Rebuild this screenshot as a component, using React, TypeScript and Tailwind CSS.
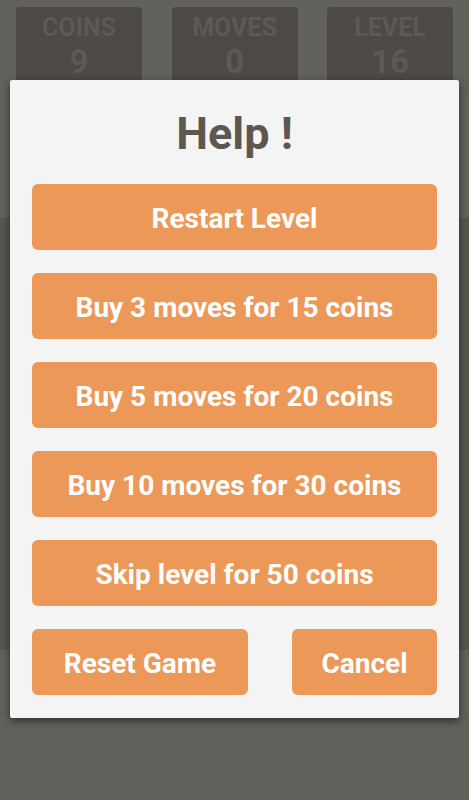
import React from "react";

const stats = [
  { label: "COINS", value: "9" },
  { label: "MOVES", value: "0" },
  { label: "LEVEL", value: "16" },
];

const actions = [
  "Restart Level",
  "Buy 3 moves for 15 coins",
  "Buy 5 moves for 20 coins",
  "Buy 10 moves for 30 coins",
  "Skip level for 50 coins",
];

export default function App() {
  return (
    <div
      className="relative w-[469px] h-[800px] overflow-hidden bg-[#63615c]"
      style={{ fontFamily: "Roboto, 'Liberation Sans', sans-serif" }}
    >
      {/* Stats bar (dimmed behind modal) */}
      <div className="flex justify-between px-4 pt-[7px]">
        {stats.map((s) => (
          <div
            key={s.label}
            className="w-[126px] h-[80px] rounded-[4px] bg-[#4d4944] flex flex-col items-center pt-[7px] text-[#5d5954] font-bold"
          >
            <span className="text-[25px] leading-[28px]">{s.label}</span>
            <span className="text-[33px] leading-[40px]">{s.value}</span>
          </div>
        ))}
      </div>

      {/* Board behind dialog */}
      <div className="mt-[131px] h-[432px] bg-[#57554f]" />

      {/* Help dialog */}
      <div className="absolute left-[10px] top-[80px] w-[449px] h-[638px] rounded-[2px] bg-[#f4f4f4] shadow-[0_3px_8px_rgba(0,0,0,0.55)] px-[22px]">
        <div className="h-[104px] pt-[28px] text-center">
          <h1 className="text-[45px] leading-[52px] font-bold text-[#5e5750]">
            Help !
          </h1>
        </div>
        <div className="flex flex-col gap-[23px]">
          {actions.map((a) => (
            <button
              key={a}
              className="h-[66px] w-full rounded-[6px] bg-[#ec9858] pt-[3px] text-white text-[28px] font-bold"
            >
              {a}
            </button>
          ))}
          <div className="flex justify-between">
            <button className="h-[66px] w-[216px] rounded-[6px] bg-[#ec9858] pt-[3px] text-white text-[28px] font-bold">
              Reset Game
            </button>
            <button className="h-[66px] w-[145px] rounded-[6px] bg-[#ec9858] pt-[3px] text-white text-[28px] font-bold">
              Cancel
            </button>
          </div>
        </div>
      </div>
    </div>
  );
}
